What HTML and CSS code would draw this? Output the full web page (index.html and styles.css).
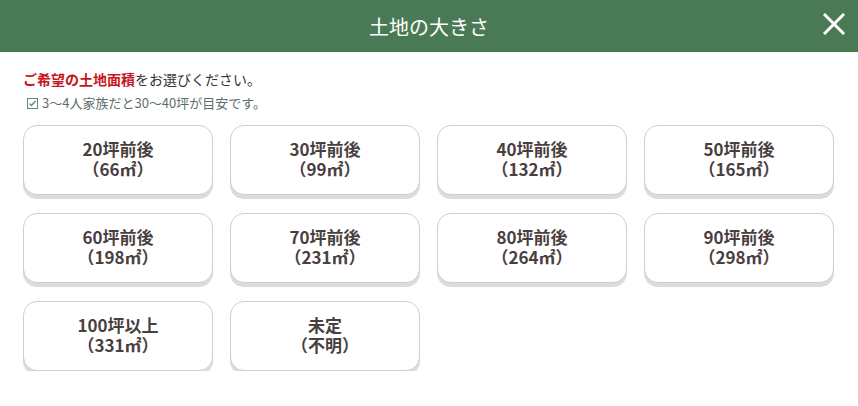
FILE: index.html
```html
<!DOCTYPE html>
<html lang="ja">
<head>
  <meta charset="UTF-8">
  <title>土地の大きさ</title>
  <link rel="stylesheet" href="styles.css">
</head>
<body>
  <header class="head">
    <h1>土地の大きさ</h1>
    <button class="close" aria-label="閉じる">
      <svg width="22" height="22" viewBox="0 0 22 22"><path d="M2 2L20 20M20 2L2 20" stroke="#fff" stroke-width="3" stroke-linecap="square"/></svg>
    </button>
  </header>

  <div class="body">
    <p class="lead"><strong>ご希望の土地面積</strong>をお選びください。</p>
    <p class="note">
      <svg width="11" height="11" viewBox="0 0 11 11"><rect x="0.5" y="0.5" width="10" height="10" fill="none" stroke="#6b8080"/><path d="M2.5 5.5L4.5 7.5L8.5 3" fill="none" stroke="#6b8080" stroke-width="1.3"/></svg>
      3〜4人家族だと30〜40坪が目安です。
    </p>

    <div class="grid">
      <button class="opt">20坪前後<br>（66㎡）</button>
      <button class="opt">30坪前後<br>（99㎡）</button>
      <button class="opt">40坪前後<br>（132㎡）</button>
      <button class="opt">50坪前後<br>（165㎡）</button>
      <button class="opt">60坪前後<br>（198㎡）</button>
      <button class="opt">70坪前後<br>（231㎡）</button>
      <button class="opt">80坪前後<br>（264㎡）</button>
      <button class="opt">90坪前後<br>（298㎡）</button>
      <button class="opt">100坪以上<br>（331㎡）</button>
      <button class="opt">未定<br>（不明）</button>
    </div>
  </div>
</body>
</html>
```

FILE: styles.css
```css
body { margin: 0; background: #fff; font-family: "Noto Sans CJK JP", "Liberation Sans", sans-serif; color: #333; }
.head { height: 52px; background: #4a7a55; display: flex; align-items: center; justify-content: center; position: relative; }
.head h1 { margin: 0; font-size: 20px; font-weight: normal; color: #fff; }
.close { position: absolute; right: 12px; top: 12px; width: 24px; height: 24px; padding: 0; border: 0; background: none; display: flex; align-items: center; justify-content: center; }
.body { padding: 17px 24px 0 23px; }
.lead { margin: 0; font-size: 14px; line-height: 20px; color: #333; }
.lead strong { color: #c8161d; }
.note { margin: 5px 0 0 4px; font-size: 13px; line-height: 18px; color: #5e6e6e; display: flex; align-items: center; gap: 4px; }
.grid { display: grid; grid-template-columns: repeat(4, 190px); column-gap: 17px; row-gap: 18px; margin-top: 13px; }
.opt { height: 70px; border: 1px solid #cfcfcf; border-radius: 14px; background: #fff; box-shadow: 0 4px 0 #dcdcdc; font-family: inherit; font-size: 17px; font-weight: bold; line-height: 20px; color: #4a3f3f; padding: 0 0 2px; }
```
